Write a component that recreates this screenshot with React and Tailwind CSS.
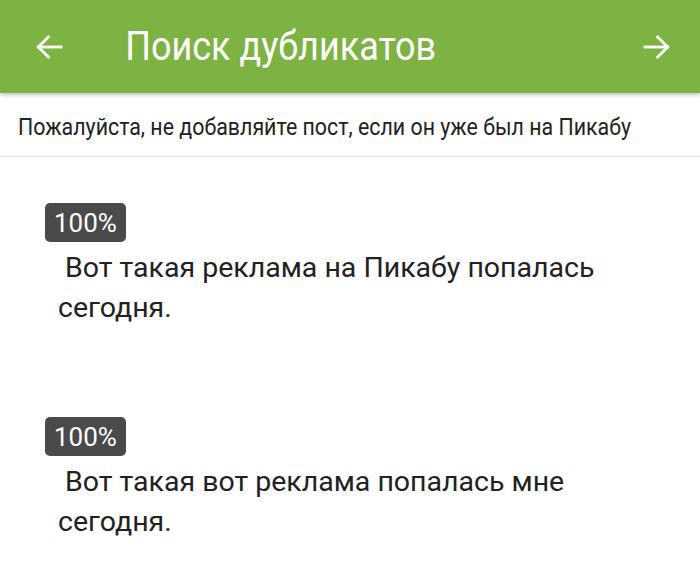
import React from "react";

function Arrow({ dir }) {
  return (
    <svg width="32" height="32" viewBox="0 0 24 24" fill="none" stroke="white" strokeWidth="2.1" strokeLinecap="square">
      {dir === "left" ? (
        <>
          <path d="M21 12H4" />
          <path d="M11.5 4.5L4 12l7.5 7.5" />
        </>
      ) : (
        <>
          <path d="M3 12h17" />
          <path d="M12.5 4.5L20 12l-7.5 7.5" />
        </>
      )}
    </svg>
  );
}

function Item({ text }) {
  return (
    <div className="pl-[45px] pr-[50px]">
      <div className="inline-block bg-[#4a4a4a] text-white rounded-[5px] px-[9px] h-[39px] leading-[40px] text-[26px]">100%</div>
      <div className="pl-[13px] text-[28.5px] leading-[40px] text-[#212121] mt-[6px]" style={{ whiteSpace: "pre-wrap" }}>
        {text}
      </div>
    </div>
  );
}

export default function App() {
  return (
    <div className="w-[700px] h-[579px] bg-white overflow-hidden" style={{ fontFamily: "Roboto, 'Noto Sans', sans-serif" }}>
      <div className="relative z-10 h-[93px] bg-[#7cb342] flex items-center shadow-[0_2px_4px_rgba(0,0,0,0.25)]">
        <div className="w-[100px] flex justify-center pr-[2px]"><Arrow dir="left" /></div>
        <div className="flex-1 text-white text-[40px] pl-[28px] origin-left scale-x-[0.9] whitespace-nowrap">Поиск дубликатов</div>
        <div className="w-[70px] flex justify-center pr-[16px]"><Arrow dir="right" /></div>
      </div>
      <div className="h-[64px] border-b border-[#e0e0e0] flex items-center pl-[18px] pt-[4px]">
        <div className="text-[24px] text-[#212121] origin-left scale-x-[0.89] whitespace-nowrap">Пожалуйста, не добавляйте пост, если он уже был на Пикабу</div>
      </div>
      <div className="pt-[46px]">
        <Item text={" Вот такая реклама на Пикабу попалась сегодня."} />
      </div>
      <div className="pt-[89px]">
        <Item text={" Вот такая вот реклама попалась мне сегодня."} />
      </div>
    </div>
  );
}
